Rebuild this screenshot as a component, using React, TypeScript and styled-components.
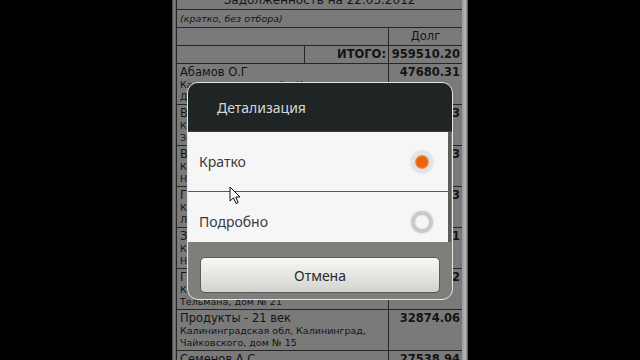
import React, { useState } from "react";
import styled, { createGlobalStyle } from "styled-components";

type Debtor = {
  id: number;
  name: string;
  address: string[];
  amount: string;
};

const debtors: Debtor[] = [
  {
    id: 1,
    name: "Абамов О.Г",
    address: ["Калининградская обл, Калининград,", "Дзержинского, дом № 5"],
    amount: "47680.31",
  },
  {
    id: 2,
    name: "Васильев В.П",
    address: ["Калининградская обл, Калининград,", "Зеленая, дом № 4"],
    amount: "45210.13",
  },
  {
    id: 3,
    name: "Волкова Е.А",
    address: ["Калининградская обл, Калининград,", "Невского, дом № 12"],
    amount: "43980.53",
  },
  {
    id: 4,
    name: "Гастроном",
    address: ["Калининградская обл, Калининград,", "Ленинский пр-т, дом № 7"],
    amount: "41275.33",
  },
  {
    id: 5,
    name: "Звезда ООО",
    address: ["Калининградская обл, Калининград,", "Нарвская, дом № 3"],
    amount: "38112.71",
  },
  {
    id: 6,
    name: "Гурман",
    address: ["Калининградская обл, Калининград,", "Тельмана, дом № 21"],
    amount: "35430.92",
  },
  {
    id: 7,
    name: "Продукты - 21 век",
    address: ["Калининградская обл, Калининград,", "Чайковского, дом № 15"],
    amount: "32874.06",
  },
  {
    id: 8,
    name: "Семенов А.С",
    address: ["Калининградская обл, Калининград,", "Горького, дом № 9"],
    amount: "27538.94",
  },
];

const options = [
  { id: "short", label: "Кратко" },
  { id: "full", label: "Подробно" },
];

const App: React.FC = () => {
  const [mode, setMode] = useState("short");

  return (
    <>
      <GlobalStyle />
      <Stage>
        <Phone>
          <LeftEdge />
          <Screen>
            <Report>
              <colgroup>
                <col style={{ width: 128 }} />
                <col style={{ width: 84 }} />
                <col style={{ width: 74 }} />
              </colgroup>
              <tbody>
                <tr>
                  <TitleCell colSpan={3}>Задолженность на 22.03.2012</TitleCell>
                </tr>
                <tr>
                  <NoteCell colSpan={3}>(кратко, без отбора)</NoteCell>
                </tr>
                <tr>
                  <HeadCell colSpan={2} />
                  <HeadCell $center>Долг</HeadCell>
                </tr>
                <tr>
                  <HeadCell />
                  <HeadCell $bold $right>
                    ИТОГО:
                  </HeadCell>
                  <HeadCell $bold $right>
                    959510.20
                  </HeadCell>
                </tr>
                {debtors.map((d) => (
                  <tr key={d.id}>
                    <NameCell colSpan={2}>
                      <Name>{d.name}</Name>
                      {d.address.map((line) => (
                        <Address key={line}>{line}</Address>
                      ))}
                    </NameCell>
                    <AmountCell>{d.amount}</AmountCell>
                  </tr>
                ))}
              </tbody>
            </Report>
          </Screen>
          <RightEdge />
        </Phone>

        <Dialog>
          <DialogHead>Детализация</DialogHead>
          <OptionList>
            {options.map((o, i) => (
              <Option
                key={o.id}
                $divider={i < options.length - 1}
                onClick={() => setMode(o.id)}
              >
                <OptionLabel>{o.label}</OptionLabel>
                <Radio $checked={mode === o.id} />
              </Option>
            ))}
          </OptionList>
          <ButtonBar>
            <CancelButton>Отмена</CancelButton>
          </ButtonBar>
        </Dialog>

        <Pointer viewBox="0 0 12 19" width="12" height="19">
          <path
            d="M1 1 L1 15 L4.5 11.8 L7 17.5 L9.2 16.6 L6.8 11 L11 11 Z"
            fill="#fafafa"
            stroke="#111"
            strokeWidth="1"
            strokeLinejoin="round"
          />
        </Pointer>
      </Stage>
    </>
  );
};

export default App;

const GlobalStyle = createGlobalStyle`
  html, body {
    margin: 0;
    padding: 0;
    background: #000;
    overflow: hidden;
  }
`;

const Stage = styled.div`
  position: relative;
  width: 640px;
  height: 360px;
  display: flex;
  justify-content: center;
  background: #000;
`;

const Phone = styled.div`
  width: 296px;
  height: 360px;
  display: flex;
`;

const LeftEdge = styled.div`
  width: 4px;
  background: linear-gradient(to right, #3a3a3a, #8a8a8a 50%, #5a5a5a);
`;

const RightEdge = styled.div`
  width: 6px;
  background: linear-gradient(to right, #9a9ba0, #b4b5ba 60%, #4a4a4e);
`;

const Screen = styled.div`
  flex: 1;
  overflow: hidden;
  background: #7a7a7a;
`;

const Report = styled.table`
  width: 286px;
  margin-top: -9px;
  border-collapse: collapse;
  table-layout: fixed;
  font-family: "DejaVu Sans", Verdana, sans-serif;
  color: #141414;

  td {
    border: 1px solid #262626;
  }
`;

const TitleCell = styled.td`
  height: 17px;
  padding: 0;
  text-align: center;
  font-size: 12px;
  line-height: 17px;
`;

const NoteCell = styled.td`
  height: 17px;
  padding: 0 3px;
  font-size: 9.5px;
  font-style: italic;
  line-height: 17px;
`;

const HeadCell = styled.td<{ $bold?: boolean; $right?: boolean; $center?: boolean }>`
  height: 17px;
  padding: 0 2px;
  font-size: 11.5px;
  line-height: 17px;
  font-weight: ${({ $bold }) => ($bold ? 700 : 400)};
  text-align: ${({ $right, $center }) =>
    $right ? "right" : $center ? "center" : "left"};
`;

const NameCell = styled.td`
  height: 39px;
  padding: 1px 3px 0;
  vertical-align: top;
  overflow: hidden;
`;

const Name = styled.div`
  font-size: 11.5px;
  line-height: 14px;
  white-space: nowrap;
`;

const Address = styled.div`
  font-size: 9.5px;
  line-height: 12px;
  white-space: nowrap;
`;

const AmountCell = styled.td`
  padding: 1px 2px 0;
  vertical-align: top;
  text-align: right;
  font-size: 11.5px;
  line-height: 14px;
  font-weight: 700;
`;

const Dialog = styled.div`
  position: absolute;
  left: 187px;
  top: 82px;
  width: 266px;
  height: 218px;
  box-sizing: border-box;
  border: 1.5px solid #e6e6e4;
  border-radius: 11px;
  background: #7e7f7a;
  overflow: hidden;
  display: flex;
  flex-direction: column;
  font-family: "Noto Sans", "Open Sans", sans-serif;
`;

const DialogHead = styled.div`
  height: 48px;
  flex-shrink: 0;
  display: flex;
  align-items: center;
  padding-left: 29px;
  background: #1f2524;
  border-bottom: 1px solid #3a3f3e;
  color: #d6d8d8;
  font-size: 14px;
`;

const OptionList = styled.div`
  height: 110px;
  flex-shrink: 0;
  overflow: hidden;
  background: #f6f6f6;
  border-right: 3px solid #5c5d5a;
  margin-right: 1px;
`;

const Option = styled.div<{ $divider: boolean }>`
  height: 59px;
  display: flex;
  align-items: center;
  justify-content: space-between;
  padding: 0 15px 0 11px;
  border-bottom: ${({ $divider }) => ($divider ? "1px solid #5a5a5a" : "none")};
  cursor: pointer;
`;

const OptionLabel = styled.span`
  color: #3a3a3a;
  font-size: 14px;
`;

const Radio = styled.span<{ $checked: boolean }>`
  box-sizing: border-box;
  width: 22px;
  height: 22px;
  border-radius: 50%;
  border: 4px solid ${({ $checked }) => ($checked ? "#e1e4e8" : "#cacaca")};
  background: ${({ $checked }) =>
    $checked
      ? "radial-gradient(circle, #e8650c 0 50%, #ef9250 68%, #e6e8eb 85%)"
      : "radial-gradient(circle, #f6f6f6 0 55%, #dedede 100%)"};
  box-shadow: 0 0 2px #c4c4c4;
`;

const ButtonBar = styled.div`
  flex: 1;
  padding: 15px 12px 0;
`;

const CancelButton = styled.button`
  width: 100%;
  height: 36px;
  border: 1px solid #5a5b58;
  border-radius: 5px;
  background: linear-gradient(to bottom, #f7f7f6, #e4e4e2 55%, #d2d2cf);
  color: #2a2a2a;
  font-family: "Noto Sans", "Open Sans", sans-serif;
  font-size: 14px;
  padding: 0;
`;

const Pointer = styled.svg`
  position: absolute;
  left: 229px;
  top: 186px;
`;
